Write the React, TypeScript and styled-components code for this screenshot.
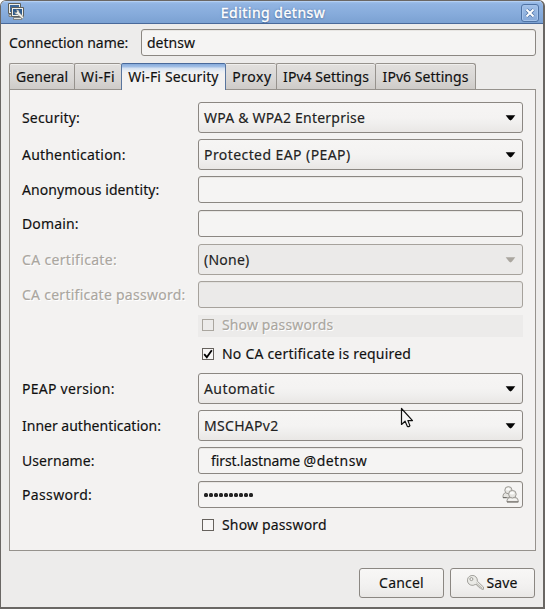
import React from "react";
import styled, { createGlobalStyle, css } from "styled-components";

const Global = createGlobalStyle`
  * { box-sizing: border-box; }
  html, body { margin: 0; padding: 0; background: #fff; }
  body {
    overflow: hidden;
    color: #101010;
    font: 14px/20px "Noto Sans", "Open Sans", sans-serif;
    font-kerning: normal;
    -webkit-text-stroke: 0.15px currentColor;
  }
`;

const Text = styled.span<{ $track?: number }>`
  white-space: pre;
  letter-spacing: ${(p) => p.$track ?? 0}px;
`;

const Window = styled.div`
  position: relative;
  display: flex;
  flex-direction: column;
  width: 545px;
  height: 609px;
  overflow: hidden;
  background: #edeceb;
  border: 1px solid #6a6764;
  border-right-width: 2px;
  border-bottom-width: 2px;
  border-radius: 6px 6px 0 0;
`;

const TitleBar = styled.header`
  display: grid;
  grid-template-columns: 28px 1fr 26px;
  align-items: center;
  height: 23px;
  flex: none;
  background: linear-gradient(#a3c4ee 0, #91b4e2 3px, #86abdb 60%, #7ba1d2 100%);
  border-bottom: 1px solid #49699a;
  box-shadow: inset 0 1px #b4cff2;
`;

const AppIcon = styled.svg`
  width: 18px;
  height: 18px;
  margin-left: 6px;
`;

const Title = styled.h1`
  margin: 1px 0 0;
  text-align: center;
  font: inherit;
  line-height: 20px;
  color: #fff;
  -webkit-text-stroke: 0.4px #fff;
  text-shadow: 0 0 2px #42669a, 0 1px 1px #42669a;
`;

const CloseButton = styled.button`
  display: flex;
  align-items: center;
  justify-content: center;
  width: 18px;
  height: 18px;
  margin: 1px 0 0 4px;
  padding: 0;
  background: linear-gradient(#a1c0e8, #86a9d9);
  border: 1px solid #4f73a5;
  border-radius: 3px;
  box-shadow: inset 0 0 0 1px #a5c3ea;
`;

const ConnectionRow = styled.label`
  display: grid;
  grid-template-columns: 132px 1fr;
  align-items: center;
  height: 27px;
  margin: 5px 7px 0 8px;
  flex: none;
`;

const borderBox = css<{ $disabled?: boolean }>`
  border: 1px solid ${(p) => (p.$disabled ? "#a6a29c" : "#8b8782")};
  border-radius: 3px;
`;

const Field = styled.div<{ $disabled?: boolean; $indent?: number }>`
  ${borderBox}
  display: flex;
  align-items: center;
  height: 27px;
  padding: 0 3px 0 ${(p) => p.$indent ?? 5}px;
  background: ${(p) => (p.$disabled ? "#ebeae9" : "#f5f4f3")};
  box-shadow: inset 0 1px ${(p) => (p.$disabled ? "#e2e1de" : "#e8e6e3")};
`;

const TabList = styled.nav`
  display: flex;
  height: 26px;
  margin: 7px 7px 0 8px;
  flex: none;
`;

const Tab = styled.button<{ $w: number; $active?: boolean }>`
  width: ${(p) => p.$w}px;
  height: 26px;
  margin: 0;
  padding: 1px 0 0;
  font: inherit;
  line-height: 20px;
  text-align: center;
  color: #101010;
  background: linear-gradient(#e2e0de, #d8d6d4 60%, #cecbc8);
  border: 1px solid #96928d;
  border-width: 1px 0 0 1px;
  border-radius: 2px 2px 0 0;
  box-shadow: inset 0 1px #efeeec;
  &:last-child { border-right-width: 1px; border-top-right-radius: 3px; }
  ${(p) =>
    p.$active &&
    css`
      position: relative;
      height: 27px;
      padding-bottom: 2px;
      background: linear-gradient(#86abdb 0, #a5c1e7 3px, #d3e0f1 4px, #e9eef4 7px, #f3f2f1 10px);
      border-width: 1px 1px 0;
      border-color: #49699a #58759e;
      box-shadow: none;
      & + button {
        padding-left: 2px;
        border-left-width: 0;
        border-top-left-radius: 0;
      }
    `}
`;

const Panel = styled.main`
  height: 462px;
  margin: 0 7px 0 8px;
  padding: 12px 12px 0 12px;
  flex: none;
  background: #f3f2f1;
  border: 1px solid #96928d;
`;

const Form = styled.div`
  display: grid;
  grid-template-columns: 176px 1fr;
  grid-template-rows: 31px 31px 28px 28px 31px 28px 23px 23px 31px 31px 28px 28px 23px;
  row-gap: 6px;
`;

const Label = styled.label<{ $disabled?: boolean; $h?: number }>`
  display: flex;
  align-items: center;
  height: ${(p) => p.$h ?? 27}px;
  color: ${(p) => (p.$disabled ? "#aaa69f" : "#101010")};
  text-shadow: ${(p) => (p.$disabled ? "1px 1px #fff" : "none")};
`;

const Combo = styled.div<{ $disabled?: boolean }>`
  ${borderBox}
  display: flex;
  align-items: center;
  justify-content: space-between;
  height: 31px;
  padding: 0 6px 0 5px;
  color: #222;
  background: ${(p) =>
    p.$disabled ? "#ebeae9" : "linear-gradient(#f6f5f4, #f4f3f2 50%, #f0efee 70%, #e9e7e5)"};
`;

const CheckRow = styled.label<{ $disabled?: boolean }>`
  grid-column: 2;
  display: flex;
  align-items: center;
  gap: 8px;
  height: 22px;
  padding: 0 0 2px 4px;
  color: ${(p) => (p.$disabled ? "#aaa69f" : "#101010")};
  background: ${(p) => (p.$disabled ? "#ecebea" : "transparent")};
  text-shadow: ${(p) => (p.$disabled ? "1px 1px #fff" : "none")};
`;

const CheckBox = styled.span<{ $disabled?: boolean }>`
  display: flex;
  align-items: center;
  justify-content: center;
  width: 12px;
  height: 12px;
  background: ${(p) => (p.$disabled ? "#ecebea" : "#f7f6f5")};
  border: 1px solid ${(p) => (p.$disabled ? "#aaa69f" : "#66625d")};
`;

const Dots = styled.span`
  display: flex;
  gap: 1px;
  flex: 1;
`;

const Dot = styled.i`
  width: 4px;
  height: 4px;
  border-radius: 1.5px;
  background: #222;
`;

const Actions = styled.footer`
  display: flex;
  justify-content: flex-end;
  gap: 6px;
  padding: 17px 8px 0 0;
`;

const Button = styled.button`
  ${borderBox}
  display: flex;
  align-items: center;
  justify-content: center;
  gap: 2px;
  width: 85px;
  height: 30px;
  padding: 0;
  font: inherit;
  line-height: 20px;
  color: #101010;
  background: linear-gradient(#f8f7f6, #f3f2f1 50%, #f0efee 70%, #e9e7e5);
`;

const Pointer = styled.svg`
  position: absolute;
  left: 398px;
  top: 405px;
  width: 16px;
  height: 23px;
`;

const Arrow = ({ color = "#050505" }: { color?: string }) => (
  <svg width="11" height="6" viewBox="0 0 11 6">
    <path d="M.7.3h9.6L7 4.6Q5.5 6.2 4 4.6Z" fill={color} />
  </svg>
);

const Check = () => (
  <svg width="10" height="10" viewBox="0 0 10 10">
    <path d="M1.2 5.2 3.8 8.2 8.8 1.2" fill="none" stroke="#000" strokeWidth="1.8" />
  </svg>
);

const NetworkIcon = () => (
  <AppIcon viewBox="0 0 18 18">
    <path d="M1.5.5h12v10h-12z" fill="#eeeee8" stroke="#5d5f5c" />
    <path d="M3 2h9v7H3z" fill="#3c689c" />
    <path d="M2 11.5h4v2H2z" fill="#dcdcd4" stroke="#666" strokeWidth=".7" />
    <path d="M4.5 4.5h12v9h-12z" fill="#f0f0ea" stroke="#5d5f5c" />
    <path d="M6 6h9v6H6z" fill="#2f5b8e" />
    <path d="M6.5 14.5h8v2h-8z" fill="#e4e4dc" stroke="#666" strokeWidth=".7" />
    <path d="m9.3 6.8 2.4.5.6 2.2 4.4 4.8-1.3 1.5-4.8-4.4-2.3-.4-.8-2.2 1.6 1 1-1Z" fill="#f6f6f2" stroke="#777a76" strokeWidth=".6" />
  </AppIcon>
);

const PeopleIcon = () => (
  <svg width="17" height="17" viewBox="0 0 17 17">
    <g fill="#e6e5e1" stroke="#94928d" strokeWidth=".9">
      <path d="M1 11.7V9.8q0-2.4 2.6-3.2h5v5.1Z" />
      <circle cx="6.4" cy="4.2" r="3.6" />
      <path d="M5 16v-1.7q.2-2.6 3.3-3h4.4q3.3.4 3.5 3V16Z" />
      <circle cx="10.4" cy="8.2" r="3.8" />
    </g>
    <ellipse cx="6" cy="3.2" rx="2" ry="1.3" fill="#fbfbfa" />
    <ellipse cx="10" cy="7.2" rx="2.1" ry="1.4" fill="#fbfbfa" />
    <path d="M6.4 13.9h8.4" stroke="#fff" fill="none" />
    <path d="M5 15.9h11.3M1 11.6h3.7" stroke="#6b6964" />
  </svg>
);

const KeyIcon = () => (
  <svg width="17" height="16" viewBox="0 0 17 16">
    <path
      d="M10.3 6.2A5 5 0 1 0 8.2 9.5L10 9.7l.5 1.4 1.4.2.3 1.4 1.4.2 1 1.3 1.8.2.1-2.3Z"
      fill="#eaeae6"
      stroke="#9a9993"
      strokeWidth=".9"
      strokeLinejoin="round"
    />
    <circle cx="4.4" cy="4.1" r="1.5" fill="#f6f5f4" stroke="#9a9993" />
    <path d="m9.2 7.7 5.9 5.4" stroke="#b8b7b1" />
  </svg>
);

const tabs = [
  { name: "General", w: 65, track: 0.08 },
  { name: "Wi-Fi", w: 47, track: 0.4 },
  { name: "Wi-Fi Security", w: 105, track: 0.15, active: true },
  { name: "Proxy", w: 50, track: 0.55 },
  { name: "IPv4 Settings", w: 99, track: 0.04 },
  { name: "IPv6 Settings", w: 101, track: 0.04 },
];

export default function App() {
  return (
    <>
      <Global />
      <Window>
        <TitleBar>
          <NetworkIcon />
          <Title><Text $track={0.5}>Editing detnsw</Text></Title>
          <CloseButton aria-label="Close">
            <svg width="10" height="10" viewBox="0 0 10 10">
              <path d="m1.5 1.5 7 7m0-7-7 7" stroke="#4f73a5" strokeWidth="3.4" />
              <path d="m1.5 1.5 7 7m0-7-7 7" stroke="#fff" strokeWidth="2" />
            </svg>
          </CloseButton>
        </TitleBar>

        <ConnectionRow>
          <Text $track={-0.04}>Connection name:</Text>
          <Field><Text>detnsw</Text></Field>
        </ConnectionRow>

        <TabList>
          {tabs.map((t) => (
            <Tab key={t.name} $w={t.w} $active={t.active}>
              <Text $track={t.track}>{t.name}</Text>
            </Tab>
          ))}
        </TabList>

        <Panel>
          <Form>
            <Label $h={31}><Text $track={0.18}>Security:</Text></Label>
            <Combo><Text $track={0.22}>WPA &amp; WPA2 Enterprise</Text><Arrow /></Combo>

            <Label $h={31}><Text $track={0.2}>Authentication:</Text></Label>
            <Combo><Text $track={0.42}>Protected EAP (PEAP)</Text><Arrow /></Combo>

            <Label><Text $track={0.08}>Anonymous identity:</Text></Label>
            <Field />

            <Label><Text $track={0.15}>Domain:</Text></Label>
            <Field />

            <Label $h={31} $disabled><Text $track={0.32}>CA certificate:</Text></Label>
            <Combo $disabled><Text $track={0.23}>(None)</Text><Arrow color="#aaa69f" /></Combo>

            <Label $disabled><Text $track={0.26}>CA certificate password:</Text></Label>
            <Field $disabled />

            <CheckRow $disabled>
              <CheckBox $disabled />
              <Text $track={0.14}>Show passwords</Text>
            </CheckRow>

            <CheckRow>
              <CheckBox><Check /></CheckBox>
              <Text $track={0.21}>No CA certificate is required</Text>
            </CheckRow>

            <Label $h={31}><Text $track={0.26}>PEAP version:</Text></Label>
            <Combo><Text $track={0.41}>Automatic</Text><Arrow /></Combo>

            <Label $h={31}><Text $track={0}>Inner authentication:</Text></Label>
            <Combo><Text $track={0.3}>MSCHAPv2</Text><Arrow /></Combo>

            <Label><Text $track={0.08}>Username:</Text></Label>
            <Field $indent={12}>
              <Text $track={-0.1}>first.lastname </Text>
              <Text $track={0.46}>@detnsw</Text>
            </Field>

            <Label><Text $track={0.35}>Password:</Text></Label>
            <Field>
              <Dots>{Array.from({ length: 10 }, (_, i) => <Dot key={i} />)}</Dots>
              <PeopleIcon />
            </Field>

            <CheckRow>
              <CheckBox />
              <Text $track={0.16}>Show password</Text>
            </CheckRow>
          </Form>
        </Panel>

        <Actions>
          <Button><Text $track={0.21}>Cancel</Text></Button>
          <Button><KeyIcon /><Text $track={0.12}>Save</Text></Button>
        </Actions>

        <Pointer viewBox="0 0 16 23">
          <path
            d="M2.5 2.5v16l3.6-3.3 2.2 5q1.4 1.2 2.6-.6l-2-5h4.6Z"
            fill="#f7f7f7"
            stroke="#111"
            strokeWidth="1.2"
            strokeLinejoin="round"
          />
        </Pointer>
      </Window>
    </>
  );
}
